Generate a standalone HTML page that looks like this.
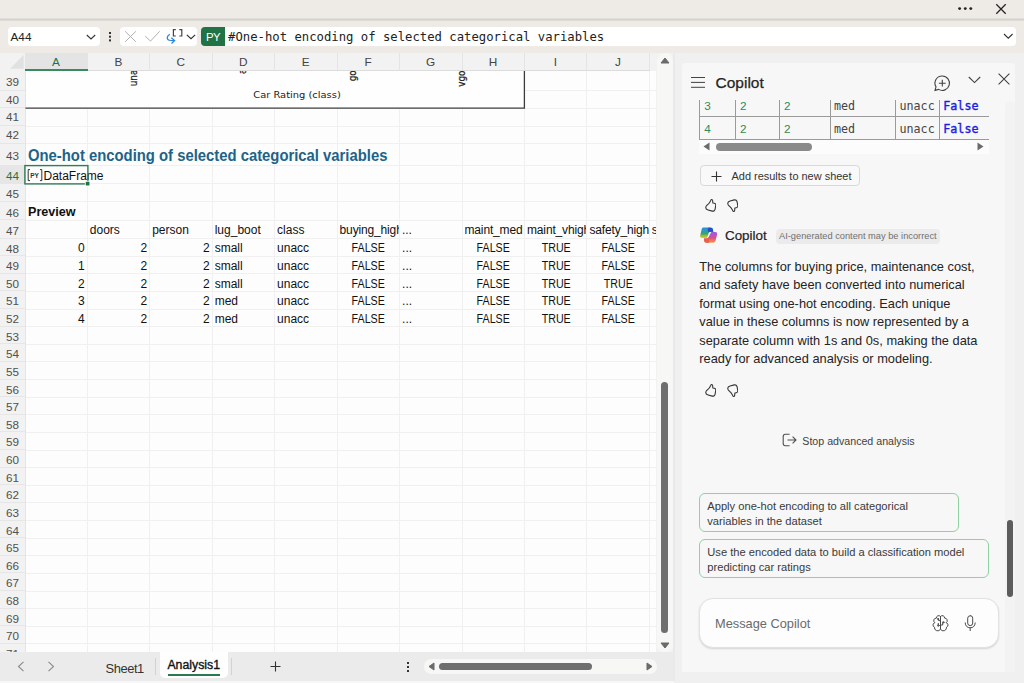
<!DOCTYPE html>
<html><head><meta charset="utf-8"><title>Excel</title>
<style>
*{box-sizing:border-box;margin:0;padding:0}
html,body{width:1024px;height:683px;overflow:hidden;background:#f0f0f0;font-family:"Liberation Sans",sans-serif;color:#242424}
.abs{position:absolute}
#top{left:0;top:0;width:1024px;height:19px;background:#eeebe6}
#topsh{left:0;top:18px;width:1024px;height:4px;background:linear-gradient(#e6e3de,#d4d2cd 40%,#ebe8e3)}
#fbar{left:0;top:21px;width:1024px;height:32.3px;background:#eeebe6}
.wbox{background:#fff;border-radius:4px}
#sheetbg{left:0;top:53px;width:674px;height:630px;background:#f2f2f2}
#grid{left:25px;top:71px;width:631px;height:581px;background:#fdfdfd;overflow:hidden}
.vl{position:absolute;top:0;width:1px;height:100%;background:#f0f0f0}
.hl{position:absolute;left:0;height:1px;width:100%;background:#f0f0f0}
.ch{position:absolute;top:53px;height:17.8px;font-size:11.8px;line-height:19.4px;text-align:center;color:#444;border-right:1px solid #e4e4e4;border-bottom:1px solid #dcdcdc}
.rh{position:absolute;left:0;width:25px;font-size:11.7px;text-align:right;padding-right:6px;color:#505050;border-bottom:1px solid #e6e6e6}
.c{position:absolute;font-size:12px;line-height:17.6px;white-space:nowrap;color:#111}
.r{text-align:right;padding-right:1.8px}
.m{text-align:center}
</style></head><body>

<div class="abs" id="top"></div><div class="abs" id="topsh"></div>
<svg class="abs" style="left:955px;top:4px" width="20" height="9" viewBox="0 0 20 9"><circle cx="4.6" cy="4.6" r="1.45" fill="#222"/><circle cx="10.25" cy="4.6" r="1.45" fill="#222"/><circle cx="15.8" cy="4.6" r="1.45" fill="#222"/></svg>
<svg class="abs" style="left:995px;top:3px" width="12" height="12" viewBox="0 0 12 12"><path d="M1.3 1.3L10.7 10.7M10.7 1.3L1.3 10.7" stroke="#222" stroke-width="1.25" fill="none"/></svg>
<div class="abs" id="fbar"></div>
<div class="abs wbox" style="left:8px;top:27px;width:92px;height:19px"></div>
<div class="abs" style="left:10.5px;top:28px;font-size:11.8px;line-height:19px;color:#222">A44</div>
<svg class="abs" style="left:86px;top:34px" width="10" height="7" viewBox="0 0 10 7"><path d="M0.8 1L5 5L9.2 1" stroke="#333" stroke-width="1.1" fill="none"/></svg>
<div class="abs" style="left:108.6px;top:32px;width:2.2px;height:2.2px;background:#333;box-shadow:0 3.7px 0 #333,0 7.4px 0 #333"></div>
<div class="abs wbox" style="left:120px;top:27px;width:77px;height:19px"></div>
<svg class="abs" style="left:120px;top:24px" width="77" height="25" viewBox="0 0 77 25"><path d="M5.1 7.3L15.9 17.8M15.9 7.3L5.1 17.8" stroke="#b0b0b0" stroke-width="1" fill="none"/><path d="M25.2 12.1L30.5 17.1L39.7 7.3" stroke="#b0b0b0" stroke-width="1" fill="none"/><path d="M55.8 5.6H53.4V12H55.8M59.3 5.6H61.8V12H59.3" stroke="#444" stroke-width="1.2" fill="none"/><path d="M49.8 10.4C47.5 11.5 46.6 13.8 47.8 15.4C48.8 16.7 50.4 16.6 54 16.6M51.3 13.7L54.6 16.6L51.5 19.5" stroke="#2b88d8" stroke-width="1.3" fill="none"/><path d="M66.8 10.9L71 14.8L75.2 10.9" stroke="#333" stroke-width="1.2" fill="none"/></svg>
<div class="abs" style="left:225px;top:27px;width:791px;height:19px;background:#fff;border-radius:0 4px 4px 0"></div>
<div class="abs" style="left:201px;top:27px;width:24px;height:19px;background:#217346;border-radius:4px 0 0 4px;color:#fff;font-size:10.8px;letter-spacing:-0.55px;line-height:20px;text-align:center;font-size:11.4px">PY</div>
<div class="abs" style="left:228px;top:28.4px;font-family:DejaVu Sans Mono,Liberation Mono,monospace;font-size:12.25px;line-height:19px;color:#222;white-space:nowrap">#One-hot encoding of selected categorical variables</div>
<svg class="abs" style="left:1003px;top:33px" width="11" height="7" viewBox="0 0 11 7"><path d="M1 1L5.3 5.2L9.6 1" stroke="#333" stroke-width="1.1" fill="none"/></svg>
<div class="abs" id="sheetbg"></div>
<svg class="abs" style="left:9px;top:54px" width="15" height="15" viewBox="0 0 15 15"><path d="M14.6 1V14.7H1Z" fill="#e1e1e1"/></svg>
<div class="ch" style="left:25px;width:62.90px;background:#e4e4e4;color:#217346;border-bottom:none;line-height:19.4px">A</div>
<div class="ch" style="left:87.3px;width:63.05px">B</div>
<div class="ch" style="left:149.75px;width:63.05px">C</div>
<div class="ch" style="left:212.2px;width:63.05px">D</div>
<div class="ch" style="left:274.65px;width:63.05px">E</div>
<div class="ch" style="left:337.1px;width:63.05px">F</div>
<div class="ch" style="left:399.55px;width:63.05px">G</div>
<div class="ch" style="left:462.0px;width:63.05px">H</div>
<div class="ch" style="left:524.45px;width:63.05px">I</div>
<div class="ch" style="left:586.9px;width:63.05px">J</div>
<div class="abs" style="left:25px;top:69px;width:62.9px;height:2px;background:#3a8a5e"></div>
<div class="rh" style="top:70.50px;height:20.00px;line-height:21.00px;">39</div>
<div class="rh" style="top:90.50px;height:17.80px;line-height:18.80px;">40</div>
<div class="rh" style="top:108.30px;height:17.70px;line-height:18.70px;">41</div>
<div class="rh" style="top:126.00px;height:17.60px;line-height:18.60px;">42</div>
<div class="rh" style="top:143.60px;height:22.20px;line-height:23.20px;">43</div>
<div class="rh" style="top:165.80px;height:17.90px;line-height:20.50px;background:#e6e6e6;color:#217346;">44</div>
<div class="rh" style="top:183.70px;height:18.20px;line-height:20.80px;">45</div>
<div class="rh" style="top:201.90px;height:18.60px;line-height:21.20px;">46</div>
<div class="rh" style="top:220.50px;height:18.00px;line-height:20.60px;">47</div>
<div class="rh" style="top:238.50px;height:17.63px;line-height:20.23px;">48</div>
<div class="rh" style="top:256.13px;height:17.63px;line-height:20.23px;">49</div>
<div class="rh" style="top:273.76px;height:17.63px;line-height:20.23px;">50</div>
<div class="rh" style="top:291.39px;height:17.63px;line-height:20.23px;">51</div>
<div class="rh" style="top:309.02px;height:17.63px;line-height:20.23px;">52</div>
<div class="rh" style="top:326.65px;height:17.63px;line-height:20.23px;">53</div>
<div class="rh" style="top:344.28px;height:17.63px;line-height:20.23px;">54</div>
<div class="rh" style="top:361.91px;height:17.63px;line-height:20.23px;">55</div>
<div class="rh" style="top:379.54px;height:17.63px;line-height:20.23px;">56</div>
<div class="rh" style="top:397.17px;height:17.63px;line-height:20.23px;">57</div>
<div class="rh" style="top:414.80px;height:17.63px;line-height:20.23px;">58</div>
<div class="rh" style="top:432.43px;height:17.63px;line-height:20.23px;">59</div>
<div class="rh" style="top:450.06px;height:17.63px;line-height:20.23px;">60</div>
<div class="rh" style="top:467.69px;height:17.63px;line-height:20.23px;">61</div>
<div class="rh" style="top:485.32px;height:17.63px;line-height:20.23px;">62</div>
<div class="rh" style="top:502.95px;height:17.63px;line-height:20.23px;">63</div>
<div class="rh" style="top:520.58px;height:17.63px;line-height:20.23px;">64</div>
<div class="rh" style="top:538.21px;height:17.63px;line-height:20.23px;">65</div>
<div class="rh" style="top:555.84px;height:17.63px;line-height:20.23px;">66</div>
<div class="rh" style="top:573.47px;height:17.63px;line-height:20.23px;">67</div>
<div class="rh" style="top:591.10px;height:17.63px;line-height:20.23px;">68</div>
<div class="rh" style="top:608.73px;height:17.63px;line-height:20.23px;">69</div>
<div class="rh" style="top:626.36px;height:17.63px;line-height:20.23px;">70</div>
<div class="rh" style="top:643.99px;height:17.63px;line-height:20.23px;">71</div>
<div class="abs" id="grid">
<div class="vl" style="left:61.8px"></div>
<div class="vl" style="left:124.2px"></div>
<div class="vl" style="left:186.7px"></div>
<div class="vl" style="left:249.1px"></div>
<div class="vl" style="left:311.6px"></div>
<div class="vl" style="left:374.1px"></div>
<div class="vl" style="left:436.5px"></div>
<div class="vl" style="left:499.0px"></div>
<div class="vl" style="left:561.4px"></div>
<div class="vl" style="left:623.9px"></div>
<div class="hl" style="top:19.00px"></div>
<div class="hl" style="top:36.80px"></div>
<div class="hl" style="top:54.50px"></div>
<div class="hl" style="top:72.10px"></div>
<div class="hl" style="top:94.30px"></div>
<div class="hl" style="top:112.20px"></div>
<div class="hl" style="top:130.40px"></div>
<div class="hl" style="top:149.00px"></div>
<div class="hl" style="top:167.00px"></div>
<div class="hl" style="top:184.63px"></div>
<div class="hl" style="top:202.26px"></div>
<div class="hl" style="top:219.89px"></div>
<div class="hl" style="top:237.52px"></div>
<div class="hl" style="top:255.15px"></div>
<div class="hl" style="top:272.78px"></div>
<div class="hl" style="top:290.41px"></div>
<div class="hl" style="top:308.04px"></div>
<div class="hl" style="top:325.67px"></div>
<div class="hl" style="top:343.30px"></div>
<div class="hl" style="top:360.93px"></div>
<div class="hl" style="top:378.56px"></div>
<div class="hl" style="top:396.19px"></div>
<div class="hl" style="top:413.82px"></div>
<div class="hl" style="top:431.45px"></div>
<div class="hl" style="top:449.08px"></div>
<div class="hl" style="top:466.71px"></div>
<div class="hl" style="top:484.34px"></div>
<div class="hl" style="top:501.97px"></div>
<div class="hl" style="top:519.60px"></div>
<div class="hl" style="top:537.23px"></div>
<div class="hl" style="top:554.86px"></div>
<div class="hl" style="top:572.49px"></div>
</div>
<div class="abs" style="left:25px;top:71px;width:1px;height:581px;background:#e4e4e4"></div>
<div class="abs" style="left:26px;top:71px;width:499px;height:38px;background:#fefefe"></div>
<svg class="abs" style="left:20px;top:66px" width="510" height="46" viewBox="0 0 510 46"><path d="M5.5 42.2H505.05M504.4 5V42.85" stroke="#3c3c3c" stroke-width="1.3" fill="none"/></svg>
<svg class="abs" style="left:25px;top:71px" width="500" height="37" viewBox="0 0 500 37"><g font-family="DejaVu Sans, Liberation Sans, sans-serif" fill="#222" stroke="#222" stroke-width="0.2"><text transform="translate(111.8,15.2) rotate(-90) scale(1,1.25)" font-size="8.8" x="0" y="0">unacc</text><text transform="translate(221.2,3) rotate(-90) scale(1,1.25)" font-size="8.8" x="0" y="0">acc</text><text transform="translate(330.6,10.3) rotate(-90) scale(1,1.25)" font-size="8.8" x="0" y="0">good</text><text transform="translate(440,15.7) rotate(-90) scale(1,1.25)" font-size="8.8" x="0" y="0">vgood</text><text transform="translate(228.3,27.3) scale(1,0.9)" font-size="9.9" stroke="none" x="0" y="0">Car Rating (class)</text></g></svg>
<div class="abs" style="left:28px;top:145.0px;font-size:16.4px;transform:scaleX(0.905);transform-origin:0 0;font-weight:bold;line-height:21px;color:#1e6388;white-space:nowrap">One-hot encoding of selected categorical variables</div>
<div class="abs c" style="left:43.5px;top:167.6px">DataFrame</div>
<svg class="abs" style="left:27px;top:168.8px" width="16" height="13" viewBox="0 0 16 13"><path d="M3 0.6H1.2V11.6H3M13 0.6H14.8V11.6H13" stroke="#333" stroke-width="1" fill="none"/><text x="3.2" y="8.6" font-family="Liberation Sans, sans-serif" font-size="6.5" font-weight="bold" fill="#333">PY</text></svg>
<svg class="abs" style="left:22px;top:163px" width="72" height="26" viewBox="0 0 72 26"><rect x="2.9" y="2.6" width="63" height="18.3" fill="none" stroke="#2f7d55" stroke-width="1.4"/><rect x="63.3" y="18.3" width="4.6" height="4.6" fill="#217346" stroke="#fdfdfd" stroke-width="0.8"/></svg>
<div class="abs c" style="left:28px;top:203.5px;font-weight:bold;font-size:12.6px">Preview</div>
<div class="abs c " style="left:89.8px;top:222.4px;width:59.2px;overflow:hidden;">doors</div>
<div class="abs c " style="left:152.2px;top:222.4px;width:59.2px;overflow:hidden;">person</div>
<div class="abs c " style="left:214.7px;top:222.4px;width:59.2px;overflow:hidden;">lug_boot</div>
<div class="abs c " style="left:277.1px;top:222.4px;width:59.3px;overflow:hidden;">class</div>
<div class="abs c " style="left:339.6px;top:222.4px;width:59.2px;overflow:hidden;letter-spacing:-0.15px;">buying_high</div>
<div class="abs c " style="left:402.1px;top:222.4px;width:59.2px;overflow:hidden;letter-spacing:-0.15px;">...</div>
<div class="abs c " style="left:464.5px;top:222.4px;width:59.3px;overflow:hidden;letter-spacing:-0.15px;">maint_med</div>
<div class="abs c " style="left:527.0px;top:222.4px;width:59.2px;overflow:hidden;letter-spacing:-0.15px;">maint_vhigh</div>
<div class="abs c " style="left:589.4px;top:222.4px;width:59.3px;overflow:hidden;letter-spacing:-0.15px;">safety_high</div>
<div class="abs c" style="left:651.8px;top:222.4px;width:4.2px;overflow:hidden">s</div>
<div class="abs c r" style="left:27.5px;top:240.4px;width:59.1px;overflow:hidden;">0</div>
<div class="abs c r" style="left:89.8px;top:240.4px;width:59.2px;overflow:hidden;">2</div>
<div class="abs c r" style="left:152.2px;top:240.4px;width:59.2px;overflow:hidden;">2</div>
<div class="abs c " style="left:214.7px;top:240.4px;width:59.2px;overflow:hidden;">small</div>
<div class="abs c " style="left:277.1px;top:240.4px;width:59.3px;overflow:hidden;">unacc</div>
<div class="abs c m" style="left:338.4px;top:240.4px;width:60.4px;overflow:hidden;transform:scaleX(0.89);">FALSE</div>
<div class="abs c " style="left:402.1px;top:240.4px;width:59.2px;overflow:hidden;">...</div>
<div class="abs c m" style="left:463.3px;top:240.4px;width:60.5px;overflow:hidden;transform:scaleX(0.89);">FALSE</div>
<div class="abs c m" style="left:525.8px;top:240.4px;width:60.4px;overflow:hidden;transform:scaleX(0.89);">TRUE</div>
<div class="abs c m" style="left:588.2px;top:240.4px;width:60.5px;overflow:hidden;transform:scaleX(0.89);">FALSE</div>
<div class="abs c r" style="left:27.5px;top:258.0px;width:59.1px;overflow:hidden;">1</div>
<div class="abs c r" style="left:89.8px;top:258.0px;width:59.2px;overflow:hidden;">2</div>
<div class="abs c r" style="left:152.2px;top:258.0px;width:59.2px;overflow:hidden;">2</div>
<div class="abs c " style="left:214.7px;top:258.0px;width:59.2px;overflow:hidden;">small</div>
<div class="abs c " style="left:277.1px;top:258.0px;width:59.3px;overflow:hidden;">unacc</div>
<div class="abs c m" style="left:338.4px;top:258.0px;width:60.4px;overflow:hidden;transform:scaleX(0.89);">FALSE</div>
<div class="abs c " style="left:402.1px;top:258.0px;width:59.2px;overflow:hidden;">...</div>
<div class="abs c m" style="left:463.3px;top:258.0px;width:60.5px;overflow:hidden;transform:scaleX(0.89);">FALSE</div>
<div class="abs c m" style="left:525.8px;top:258.0px;width:60.4px;overflow:hidden;transform:scaleX(0.89);">TRUE</div>
<div class="abs c m" style="left:588.2px;top:258.0px;width:60.5px;overflow:hidden;transform:scaleX(0.89);">FALSE</div>
<div class="abs c r" style="left:27.5px;top:275.7px;width:59.1px;overflow:hidden;">2</div>
<div class="abs c r" style="left:89.8px;top:275.7px;width:59.2px;overflow:hidden;">2</div>
<div class="abs c r" style="left:152.2px;top:275.7px;width:59.2px;overflow:hidden;">2</div>
<div class="abs c " style="left:214.7px;top:275.7px;width:59.2px;overflow:hidden;">small</div>
<div class="abs c " style="left:277.1px;top:275.7px;width:59.3px;overflow:hidden;">unacc</div>
<div class="abs c m" style="left:338.4px;top:275.7px;width:60.4px;overflow:hidden;transform:scaleX(0.89);">FALSE</div>
<div class="abs c " style="left:402.1px;top:275.7px;width:59.2px;overflow:hidden;">...</div>
<div class="abs c m" style="left:463.3px;top:275.7px;width:60.5px;overflow:hidden;transform:scaleX(0.89);">FALSE</div>
<div class="abs c m" style="left:525.8px;top:275.7px;width:60.4px;overflow:hidden;transform:scaleX(0.89);">TRUE</div>
<div class="abs c m" style="left:588.2px;top:275.7px;width:60.5px;overflow:hidden;transform:scaleX(0.89);">TRUE</div>
<div class="abs c r" style="left:27.5px;top:293.3px;width:59.1px;overflow:hidden;">3</div>
<div class="abs c r" style="left:89.8px;top:293.3px;width:59.2px;overflow:hidden;">2</div>
<div class="abs c r" style="left:152.2px;top:293.3px;width:59.2px;overflow:hidden;">2</div>
<div class="abs c " style="left:214.7px;top:293.3px;width:59.2px;overflow:hidden;">med</div>
<div class="abs c " style="left:277.1px;top:293.3px;width:59.3px;overflow:hidden;">unacc</div>
<div class="abs c m" style="left:338.4px;top:293.3px;width:60.4px;overflow:hidden;transform:scaleX(0.89);">FALSE</div>
<div class="abs c " style="left:402.1px;top:293.3px;width:59.2px;overflow:hidden;">...</div>
<div class="abs c m" style="left:463.3px;top:293.3px;width:60.5px;overflow:hidden;transform:scaleX(0.89);">FALSE</div>
<div class="abs c m" style="left:525.8px;top:293.3px;width:60.4px;overflow:hidden;transform:scaleX(0.89);">TRUE</div>
<div class="abs c m" style="left:588.2px;top:293.3px;width:60.5px;overflow:hidden;transform:scaleX(0.89);">FALSE</div>
<div class="abs c r" style="left:27.5px;top:310.9px;width:59.1px;overflow:hidden;">4</div>
<div class="abs c r" style="left:89.8px;top:310.9px;width:59.2px;overflow:hidden;">2</div>
<div class="abs c r" style="left:152.2px;top:310.9px;width:59.2px;overflow:hidden;">2</div>
<div class="abs c " style="left:214.7px;top:310.9px;width:59.2px;overflow:hidden;">med</div>
<div class="abs c " style="left:277.1px;top:310.9px;width:59.3px;overflow:hidden;">unacc</div>
<div class="abs c m" style="left:338.4px;top:310.9px;width:60.4px;overflow:hidden;transform:scaleX(0.89);">FALSE</div>
<div class="abs c " style="left:402.1px;top:310.9px;width:59.2px;overflow:hidden;">...</div>
<div class="abs c m" style="left:463.3px;top:310.9px;width:60.5px;overflow:hidden;transform:scaleX(0.89);">FALSE</div>
<div class="abs c m" style="left:525.8px;top:310.9px;width:60.4px;overflow:hidden;transform:scaleX(0.89);">TRUE</div>
<div class="abs c m" style="left:588.2px;top:310.9px;width:60.5px;overflow:hidden;transform:scaleX(0.89);">FALSE</div>
<div class="abs" style="left:656.6px;top:53px;width:16.7px;height:599.7px;background:#f7f7f6;border-radius:8.3px"></div>
<svg class="abs" style="left:660px;top:57.2px" width="10" height="7" viewBox="0 0 10 7"><path d="M5 1L9 6H1Z" fill="#6b6b6b" stroke="#6b6b6b" stroke-width="1" stroke-linejoin="round"/></svg>
<svg class="abs" style="left:660px;top:642.4px" width="10" height="7" viewBox="0 0 10 7"><path d="M5 6L9 1H1Z" fill="#6b6b6b" stroke="#6b6b6b" stroke-width="1" stroke-linejoin="round"/></svg>
<div class="abs" style="left:661.2px;top:381.8px;width:7.2px;height:251px;background:#6e6e6e;border-radius:3.6px"></div>
<div class="abs" style="left:0;top:652px;width:673.3px;height:29px;background:#ebebeb"></div>
<div class="abs" style="left:0;top:681px;width:1024px;height:2px;background:#f7f7f7"></div>
<svg class="abs" style="left:17px;top:661px" width="8" height="11" viewBox="0 0 8 11"><path d="M6.5 0.8L1.5 5.5L6.5 10.2" stroke="#8a8a8a" stroke-width="1.1" fill="none"/></svg>
<svg class="abs" style="left:47px;top:661px" width="8" height="11" viewBox="0 0 8 11"><path d="M1.5 0.8L6.5 5.5L1.5 10.2" stroke="#8a8a8a" stroke-width="1.1" fill="none"/></svg>
<div class="abs" style="left:105.5px;top:659.9px;font-size:12.9px;letter-spacing:-0.42px;line-height:17px;color:#333">Sheet1</div>
<div class="abs" style="left:155.3px;top:658px;width:1px;height:17px;background:#d2d2d2"></div>
<div class="abs" style="left:160px;top:652px;width:67.6px;height:26.2px;background:#fefefe;border-radius:0 0 5px 5px"></div>
<div class="abs" style="left:167.4px;top:657.4px;font-size:12.3px;line-height:17px;color:#111;-webkit-text-stroke:0.35px #111">Analysis1</div>
<div class="abs" style="left:167.6px;top:673.7px;width:52.4px;height:2px;background:#2a7a4f"></div>
<div class="abs" style="left:231px;top:658px;width:1px;height:17px;background:#d2d2d2"></div>
<svg class="abs" style="left:270px;top:661px" width="11" height="11" viewBox="0 0 11 11"><path d="M5.5 0.5V10.5M0.5 5.5H10.5" stroke="#333" stroke-width="1.1" fill="none"/></svg>
<div class="abs" style="left:407px;top:662px;width:2px;height:2px;background:#333;box-shadow:0 4px 0 #333,0 8px 0 #333"></div>
<div class="abs" style="left:423.6px;top:659.2px;width:233px;height:14.5px;background:#f7f7f6;border-radius:7.25px"></div>
<svg class="abs" style="left:427.5px;top:662px" width="7" height="9" viewBox="0 0 7 9"><path d="M1 4.5L6 1V8Z" fill="#6b6b6b" stroke="#6b6b6b" stroke-width="1" stroke-linejoin="round"/></svg>
<svg class="abs" style="left:645.7px;top:662px" width="7" height="9" viewBox="0 0 7 9"><path d="M6 4.5L1 1V8Z" fill="#6b6b6b" stroke="#6b6b6b" stroke-width="1" stroke-linejoin="round"/></svg>
<div class="abs" style="left:438.8px;top:662.8px;width:153.4px;height:7.2px;background:#6e6e6e;border-radius:3.6px"></div>
<div class="abs" style="left:674px;top:53px;width:350px;height:630px;background:#f0f0f0"></div>
<div class="abs" style="left:682px;top:63px;width:333px;height:608.5px;background:#f7f7f7;border-radius:4px 4px 0 0"></div>
<div class="abs" style="left:673px;top:53px;width:1.5px;height:628px;background:#e9e9e9"></div>
<div class="abs" style="left:699px;top:99.5px;width:290px;height:54px;overflow:hidden">
<div class="abs" style="left:0;top:40px;width:290px;height:14px;background:#fcfcfc"></div>
<div class="abs" style="left:0;top:16.4px;width:290px;height:1px;background:#9a9a9a"></div>
<div class="abs" style="left:0;top:39.4px;width:290px;height:1px;background:#9a9a9a"></div>
<div class="abs" style="left:0.1px;top:0;width:1px;height:40px;background:#9a9a9a"></div>
<div class="abs" style="left:35.9px;top:0;width:1px;height:40px;background:#9a9a9a"></div>
<div class="abs" style="left:79.8px;top:0;width:1px;height:40px;background:#9a9a9a"></div>
<div class="abs" style="left:130.9px;top:0;width:1px;height:40px;background:#9a9a9a"></div>
<div class="abs" style="left:196.2px;top:0;width:1px;height:40px;background:#9a9a9a"></div>
<div class="abs" style="left:239.7px;top:0;width:1px;height:40px;background:#9a9a9a"></div>
<div class="abs" style="left:5.3px;top:-1.6px;line-height:16px;white-space:nowrap;font-family:'Liberation Sans',sans-serif;color:#2e8b57;font-size:11.7px;">3</div>
<div class="abs" style="left:41.0px;top:-1.6px;line-height:16px;white-space:nowrap;font-family:'Liberation Sans',sans-serif;color:#2e8b57;font-size:11.7px;">2</div>
<div class="abs" style="left:85.0px;top:-1.6px;line-height:16px;white-space:nowrap;font-family:'Liberation Sans',sans-serif;color:#2e8b57;font-size:11.7px;">2</div>
<div class="abs" style="left:135.0px;top:-1.6px;line-height:16px;white-space:nowrap;font-family:'DejaVu Sans Mono','Liberation Mono',monospace;color:#444;font-size:11.7px;">med</div>
<div class="abs" style="left:200.5px;top:-1.6px;line-height:16px;white-space:nowrap;font-family:'DejaVu Sans Mono','Liberation Mono',monospace;color:#444;font-size:11.7px;">unacc</div>
<div class="abs" style="left:244.3px;top:-1.6px;line-height:16px;white-space:nowrap;font-family:'DejaVu Sans Mono','Liberation Mono',monospace;color:#1c1ce6;-webkit-text-stroke:0.4px #1c1ce6;font-size:11.7px;">False</div>
<div class="abs" style="left:5.3px;top:21.4px;line-height:16px;white-space:nowrap;font-family:'Liberation Sans',sans-serif;color:#2e8b57;font-size:11.7px;">4</div>
<div class="abs" style="left:41.0px;top:21.4px;line-height:16px;white-space:nowrap;font-family:'Liberation Sans',sans-serif;color:#2e8b57;font-size:11.7px;">2</div>
<div class="abs" style="left:85.0px;top:21.4px;line-height:16px;white-space:nowrap;font-family:'Liberation Sans',sans-serif;color:#2e8b57;font-size:11.7px;">2</div>
<div class="abs" style="left:135.0px;top:21.4px;line-height:16px;white-space:nowrap;font-family:'DejaVu Sans Mono','Liberation Mono',monospace;color:#444;font-size:11.7px;">med</div>
<div class="abs" style="left:200.5px;top:21.4px;line-height:16px;white-space:nowrap;font-family:'DejaVu Sans Mono','Liberation Mono',monospace;color:#444;font-size:11.7px;">unacc</div>
<div class="abs" style="left:244.3px;top:21.4px;line-height:16px;white-space:nowrap;font-family:'DejaVu Sans Mono','Liberation Mono',monospace;color:#1c1ce6;-webkit-text-stroke:0.4px #1c1ce6;font-size:11.7px;">False</div>
<svg class="abs" style="left:4px;top:42.5px" width="7" height="9" viewBox="0 0 7 9"><path d="M0.5 4.5L6.5 0.4V8.6Z" fill="#6b6b6b"/></svg>
<svg class="abs" style="left:278px;top:42.5px" width="7" height="9" viewBox="0 0 7 9"><path d="M6.5 4.5L0.5 0.4V8.6Z" fill="#6b6b6b"/></svg>
<div class="abs" style="left:17px;top:43.3px;width:96px;height:8px;background:#8a8a8a;border-radius:4px"></div>
</div>
<div class="abs" style="left:690.5px;top:77px;width:14.5px;height:1.2px;background:#424242;box-shadow:0 4.9px 0 #424242,0 9.8px 0 #424242"></div>
<div class="abs" style="left:715.5px;top:73px;font-size:15.5px;line-height:20px;color:#242424;-webkit-text-stroke:0.25px #242424;white-space:nowrap">Copilot</div>
<svg class="abs" style="left:932.5px;top:73.6px" width="18" height="18" viewBox="0 0 18 18"><path d="M9.3 2A7.2 7.2 0 1 1 5.6 15.4L2 16.4L3 12.9A7.2 7.2 0 0 1 9.3 2Z" stroke="#424242" stroke-width="1.1" fill="none"/><path d="M9.3 5.8V12.6M5.9 9.2H12.7" stroke="#424242" stroke-width="1.1" fill="none"/></svg>
<svg class="abs" style="left:968px;top:76px" width="13" height="8" viewBox="0 0 13 8"><path d="M0.8 1L6.5 6.6L12.2 1" stroke="#424242" stroke-width="1.1" fill="none"/></svg>
<svg class="abs" style="left:998px;top:73px" width="12" height="12" viewBox="0 0 12 12"><path d="M0.6 0.6L11.4 11.4M11.4 0.6L0.6 11.4" stroke="#424242" stroke-width="1.1" fill="none"/></svg>
<div class="abs" style="left:699.5px;top:165.2px;width:160.3px;height:21.2px;border:1px solid #d9d9d9;border-radius:4px;background:#f9f9f9"></div>
<svg class="abs" style="left:711px;top:170.5px" width="11" height="11" viewBox="0 0 11 11"><path d="M5.5 0.5V10.5M0.5 5.5H10.5" stroke="#333" stroke-width="1.1" fill="none"/></svg>
<div class="abs" id="addres" style="left:731.5px;top:168px;font-size:10.96px;line-height:16px;color:#333;white-space:nowrap">Add results to new sheet</div>
<svg class="abs" style="left:704.5px;top:198.4px" width="11.3" height="14" preserveAspectRatio="none" viewBox="0 0 12 14"><path d="M6.2 2.2C6.5 1.2 7.9 1.2 8.1 2.4C8.3 3.4 8.1 4.2 8.4 5L9.9 5.3C11 5.5 11.6 6.3 11.4 7.4L10.8 10.8C10.5 12.5 9.3 13.5 7.7 13.1L3.3 12C1.6 11.6 0.6 10.4 0.9 9C1.1 8 1.7 7.3 2.7 6.7C4.3 5.7 5.4 4 6.2 2.2Z" stroke="#333" stroke-width="1.15" fill="none" stroke-linejoin="round"/></svg>
<svg class="abs" style="left:726.6px;top:199.1px" width="11.3" height="14" preserveAspectRatio="none" viewBox="0 0 12 14"><g transform="translate(0,14) scale(1,-1)"><path d="M6.2 2.2C6.5 1.2 7.9 1.2 8.1 2.4C8.3 3.4 8.1 4.2 8.4 5L9.9 5.3C11 5.5 11.6 6.3 11.4 7.4L10.8 10.8C10.5 12.5 9.3 13.5 7.7 13.1L3.3 12C1.6 11.6 0.6 10.4 0.9 9C1.1 8 1.7 7.3 2.7 6.7C4.3 5.7 5.4 4 6.2 2.2Z" stroke="#333" stroke-width="1.15" fill="none" stroke-linejoin="round"/></g></svg>
<svg class="abs" style="left:695px;top:222px" width="30" height="26" viewBox="0 0 30 26"><defs><linearGradient id="g1" x1="0" y1="0" x2="0" y2="1"><stop offset="0" stop-color="#2b8fe0"/><stop offset="0.38" stop-color="#2d9cb0"/><stop offset="0.6" stop-color="#3aa65c"/><stop offset="0.8" stop-color="#9cbf3c"/><stop offset="1" stop-color="#e6c62e"/></linearGradient><linearGradient id="g2" x1="0" y1="0" x2="0" y2="1"><stop offset="0" stop-color="#9560d8"/><stop offset="0.3" stop-color="#b656c0"/><stop offset="0.55" stop-color="#de5088"/><stop offset="0.8" stop-color="#ee7a58"/><stop offset="1" stop-color="#f09a50"/></linearGradient></defs><path d="M8.6 5.6H15.6C17 5.6 17.7 6.4 17.9 7.6L18.3 9.9H15.4C14.4 9.9 13.9 10.4 13.6 11.2L12 15.9H6.8C5.4 15.9 4.8 14.9 5.2 13.6L6.6 7.4C6.9 6.2 7.6 5.6 8.6 5.6Z" fill="url(#g1)"/><path d="M13 5.7H15.6C17 5.7 17.7 6.4 17.9 7.6L18.3 9.8H15.4C14.6 9.8 14.1 10.1 13.8 10.6L13.2 9.4C12.8 8.2 12.6 6.6 13 5.7Z" fill="#2a4cc6"/><path d="M16.3 10.1H20.4C21.8 10.1 22.4 11.1 22.1 12.4L20.6 18.6C20.3 19.9 19.6 20.8 18.4 20.8H11.4C10 20.8 9.4 20 9.2 18.8L8.9 16.4H11.8C12.8 16.4 13.3 15.9 13.6 15.1Z" fill="url(#g2)"/><path d="M8.9 16.4H11.8C12.6 16.4 13.1 16.1 13.4 15.6L13.9 17.2C14.3 18.6 14.4 19.8 14 20.8H11.4C10 20.8 9.4 20 9.2 18.8Z" fill="#ea5e4e"/></svg>
<div class="abs" style="left:725px;top:226.5px;font-size:13.4px;line-height:18px;color:#242424;-webkit-text-stroke:0.22px #242424;white-space:nowrap">Copilot</div>
<div class="abs" style="left:775.5px;top:228.8px;width:164.5px;height:15.6px;background:#ebebeb;border-radius:4px"></div>
<div class="abs" id="badge" style="left:779px;top:229.3px;font-size:9.27px;line-height:14px;color:#707070;white-space:nowrap">AI-generated content may be incorrect</div>
<div class="abs para" style="left:699.3px;top:258.00px;font-size:12.8px;line-height:18px;color:#242424;white-space:nowrap">The columns for buying price, maintenance cost,</div>
<div class="abs para" style="left:699.3px;top:276.45px;font-size:12.8px;line-height:18px;color:#242424;white-space:nowrap">and safety have been converted into numerical</div>
<div class="abs para" style="left:699.3px;top:294.90px;font-size:12.8px;line-height:18px;color:#242424;white-space:nowrap">format using one-hot encoding. Each unique</div>
<div class="abs para" style="left:699.3px;top:313.35px;font-size:12.8px;line-height:18px;color:#242424;white-space:nowrap">value in these columns is now represented by a</div>
<div class="abs para" style="left:699.3px;top:331.80px;font-size:12.8px;line-height:18px;color:#242424;white-space:nowrap">separate column with 1s and 0s, making the data</div>
<div class="abs para" style="left:699.3px;top:350.25px;font-size:12.8px;line-height:18px;color:#242424;white-space:nowrap">ready for advanced analysis or modeling.</div>
<svg class="abs" style="left:704.5px;top:383.4px" width="11.3" height="14" preserveAspectRatio="none" viewBox="0 0 12 14"><path d="M6.2 2.2C6.5 1.2 7.9 1.2 8.1 2.4C8.3 3.4 8.1 4.2 8.4 5L9.9 5.3C11 5.5 11.6 6.3 11.4 7.4L10.8 10.8C10.5 12.5 9.3 13.5 7.7 13.1L3.3 12C1.6 11.6 0.6 10.4 0.9 9C1.1 8 1.7 7.3 2.7 6.7C4.3 5.7 5.4 4 6.2 2.2Z" stroke="#333" stroke-width="1.15" fill="none" stroke-linejoin="round"/></svg>
<svg class="abs" style="left:726.6px;top:384.1px" width="11.3" height="14" preserveAspectRatio="none" viewBox="0 0 12 14"><g transform="translate(0,14) scale(1,-1)"><path d="M6.2 2.2C6.5 1.2 7.9 1.2 8.1 2.4C8.3 3.4 8.1 4.2 8.4 5L9.9 5.3C11 5.5 11.6 6.3 11.4 7.4L10.8 10.8C10.5 12.5 9.3 13.5 7.7 13.1L3.3 12C1.6 11.6 0.6 10.4 0.9 9C1.1 8 1.7 7.3 2.7 6.7C4.3 5.7 5.4 4 6.2 2.2Z" stroke="#333" stroke-width="1.15" fill="none" stroke-linejoin="round"/></g></svg>
<svg class="abs" style="left:782px;top:432.9px" width="15" height="14" viewBox="0 0 15 14"><path d="M7.6 1.2H3.4C2.2 1.2 1.2 2.2 1.2 3.4V10.6C1.2 11.8 2.2 12.8 3.4 12.8H7.6" stroke="#505050" stroke-width="1.1" fill="none"/><path d="M5.5 7H13.8M10.6 3.6L14 7L10.6 10.4" stroke="#505050" stroke-width="1.1" fill="none"/></svg>
<div class="abs" id="stop" style="left:802.3px;top:432.6px;font-size:10.65px;line-height:16px;color:#424242;white-space:nowrap">Stop advanced analysis</div>
<div class="abs" style="left:699px;top:493px;width:260px;height:39px;border:1px solid #8fd1a2;border-radius:6px;background:#f7f7f7"></div>
<div class="abs chip" style="left:707.3px;top:498.6px;font-size:11.15px;line-height:15.2px;color:#3a3a3a;white-space:nowrap">Apply one-hot encoding to all categorical<br>variables in the dataset</div>
<div class="abs" style="left:699px;top:539px;width:290px;height:39px;border:1px solid #8fd1a2;border-radius:6px;background:#f7f7f7"></div>
<div class="abs chip" style="left:707.3px;top:544.6px;font-size:11.15px;line-height:15.2px;color:#3a3a3a;white-space:nowrap">Use the encoded data to build a classification model<br>predicting car ratings</div>
<div class="abs" style="left:699px;top:598px;width:299.5px;height:49.5px;background:#fdfdfd;border:1px solid #e2e2e2;border-radius:14px;box-shadow:0 1px 2px rgba(0,0,0,0.14)"></div>
<div class="abs" style="left:715px;top:614.5px;font-size:12.8px;line-height:18px;color:#6a6a6a;white-space:nowrap">Message Copilot</div>
<svg class="abs" style="left:928px;top:610px" width="56" height="28" viewBox="0 0 56 28"><g stroke="#4a4a4a" stroke-width="1" fill="none" stroke-linejoin="round" stroke-linecap="round"><path d="M12.5 6.4A2.35 2.35 0 0 0 8.4 8.1A2.5 2.5 0 0 0 6.9 12.7A2.35 2.35 0 0 0 6.5 17.2A3.25 3.25 0 0 0 12.5 19.3"/><path d="M12.5 6.4A2.35 2.35 0 0 1 16.6 8.1A2.5 2.5 0 0 1 18.1 12.7A2.35 2.35 0 0 1 18.5 17.2A3.25 3.25 0 0 1 12.5 19.3"/><path d="M12.5 6.4V19.2"/><path d="M12.5 15H14.7V12.9M12.5 10.6H10.6V9.4M10.3 13.4V14.6"/><circle cx="10.3" cy="15.5" r="0.8"/><circle cx="15.3" cy="12.3" r="0.7"/><circle cx="10" cy="9" r="0.6"/><rect x="39.7" y="5.7" width="5" height="9.9" rx="2.5"/><path d="M37.2 12.9C37.2 16 39.4 17.8 42.2 17.8C45 17.8 47.2 16 47.2 12.9M42.2 17.8V20.6"/></g></svg>
<div class="abs" style="left:1005px;top:100.5px;width:10px;height:571px;background:#f3f3f3;border-radius:5px 5px 0 0"></div>
<div class="abs" style="left:1007px;top:519.5px;width:6px;height:77px;background:#5c5c5c;border-radius:3px"></div>
</body></html>
